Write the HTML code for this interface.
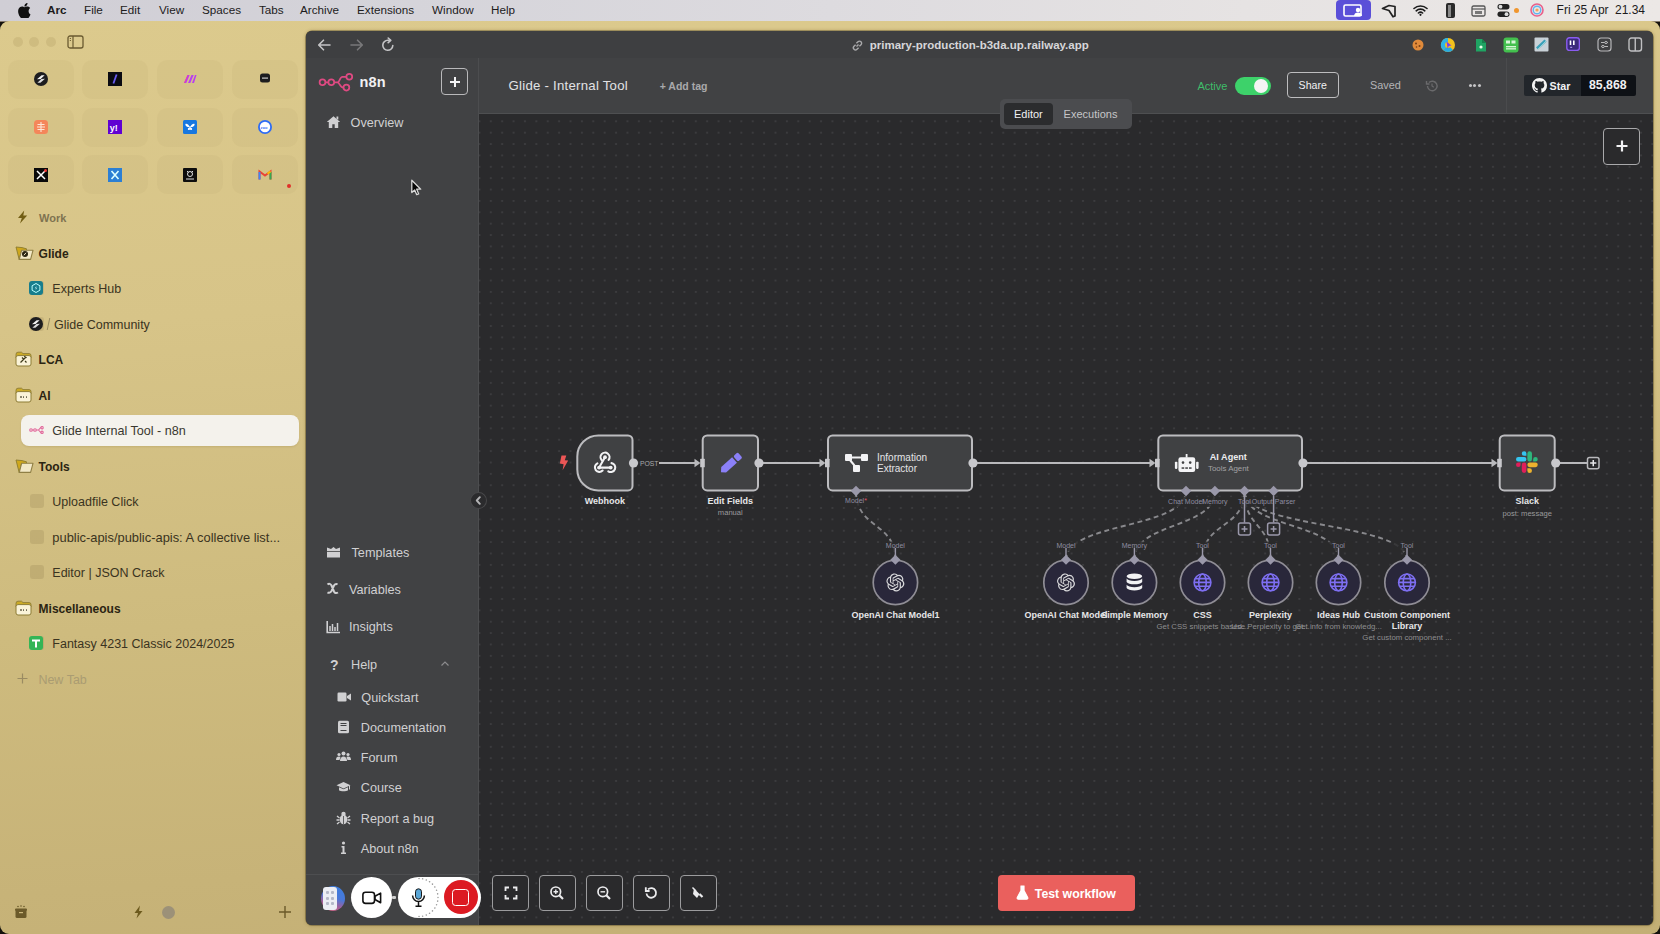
<!DOCTYPE html>
<html><head><meta charset="utf-8">
<style>
*{box-sizing:border-box;margin:0;padding:0}
html,body{width:1660px;height:934px;overflow:hidden;background:#14110c;font-family:"Liberation Sans",sans-serif}
.a{position:absolute}
.t{position:absolute;white-space:nowrap;line-height:16px}
#menubar{left:0;top:0;width:1660px;height:21.5px;background:linear-gradient(90deg,#d0ced5 0%,#d5d4da 25%,#dddbdf 50%,#e6e3e3 75%,#ece8e6 100%);border-bottom:1px solid #85796a;color:#1d1b1c;font-size:11.7px}
#menubar .t{top:2px}
#arc{left:0;top:21px;width:1660px;height:913px;border-radius:9px;background:linear-gradient(176deg,#dcca8d 0%,#d7c488 30%,#cebb7e 60%,#c7b378 85%,#c3af75 100%)}
.tile{position:absolute;width:66px;height:39px;border-radius:10px;background:rgba(120,100,40,0.045)}
.sl{font-size:12.5px;color:#3a3320}
.sb{font-size:12px;color:#2a2412;font-weight:bold}
#win{left:307px;top:31px;width:1346px;height:894px;background:#3e3f41;border-radius:6px;overflow:hidden}
.ns{font-size:12.7px;color:#d0d0d2}
</style></head>
<body>
<!-- MENU BAR -->
<div id="menubar" class="a">
 <svg class="a" style="left:18px;top:3px" width="13" height="15" viewBox="0 0 13 15"><path d="M10.6 8c0-1.9 1.5-2.8 1.6-2.9-.9-1.3-2.3-1.5-2.8-1.5-1.2-.1-2.3.7-2.9.7-.6 0-1.5-.7-2.5-.7C2.7 3.6 1.5 4.4.8 5.6c-1.4 2.4-.4 6 1 8 .7 1 1.4 2 2.4 2 1 0 1.3-.6 2.5-.6s1.5.6 2.5.6 1.7-1 2.3-2c.7-1.1 1-2.2 1-2.3 0 0-2-.8-1.9-3.3zM8.7 2.4c.5-.6.9-1.5.8-2.4-.8 0-1.7.5-2.3 1.1-.5.6-.9 1.5-.8 2.3.9.1 1.7-.4 2.3-1z" fill="#111"/></svg>
 <span class="t" style="left:47px;font-weight:bold">Arc</span>
 <span class="t" style="left:84px">File</span>
 <span class="t" style="left:120px">Edit</span>
 <span class="t" style="left:159px">View</span>
 <span class="t" style="left:202px">Spaces</span>
 <span class="t" style="left:259px">Tabs</span>
 <span class="t" style="left:300px">Archive</span>
 <span class="t" style="left:357px">Extensions</span>
 <span class="t" style="left:432px">Window</span>
 <span class="t" style="left:491px">Help</span>
 <div class="a" style="left:1336px;top:0;width:35px;height:20px;background:#5a4fd8;border-radius:4px"></div>
 <svg class="a" style="left:1343px;top:4px" width="21" height="13" viewBox="0 0 21 13"><rect x="1" y="1" width="17" height="11" rx="1.5" fill="none" stroke="#fff" stroke-width="1.6"/><circle cx="15" cy="6" r="2.2" fill="#fff"/><path d="M11 12c0-2.5 2-3.6 4-3.6s4 1.1 4 3.6z" fill="#fff"/></svg>
 <svg class="a" style="left:1381px;top:4px" width="16" height="14" viewBox="0 0 16 14"><path d="M1.5 4.5L8 1.5l6 1v9.5l-2 .8L8 6.5z" fill="none" stroke="#222" stroke-width="1.7" stroke-linejoin="round"/></svg>
 <svg class="a" style="left:1413px;top:4px" width="15" height="12" viewBox="0 0 15 12"><path d="M1 4.5a9.5 9.5 0 0 1 13 0M3.2 6.8a6.3 6.3 0 0 1 8.6 0M5.4 9a3.2 3.2 0 0 1 4.2 0" fill="none" stroke="#1a1a1a" stroke-width="1.6" stroke-linecap="round"/><circle cx="7.5" cy="10.8" r="1.1" fill="#1a1a1a"/></svg>
 <div class="a" style="left:1446px;top:3px;width:9px;height:15px;border-radius:2px;background:#2a2a2a"></div>
 <div class="a" style="left:1447.5px;top:4.5px;width:3px;height:12px;background:#8a8a8a"></div>
 <svg class="a" style="left:1471px;top:5px" width="15" height="12" viewBox="0 0 15 12"><rect x="1" y="1" width="13" height="10" rx="1.5" fill="none" stroke="#555" stroke-width="1.3"/><line x1="1" y1="4" x2="14" y2="4" stroke="#555" stroke-width="1.2"/><rect x="4" y="6" width="7" height="3" fill="#777"/></svg>
 <svg class="a" style="left:1497px;top:3px" width="13" height="15" viewBox="0 0 13 15"><rect x="0.5" y="1" width="12" height="5.5" rx="2.7" fill="#222"/><circle cx="3.5" cy="3.7" r="1.9" fill="#ddd"/><rect x="0.5" y="8.5" width="12" height="5.5" rx="2.7" fill="#222"/><circle cx="9.5" cy="11.2" r="1.9" fill="#ddd"/></svg>
 <div class="a" style="left:1514px;top:8px;width:5px;height:5px;border-radius:50%;background:#f0962e"></div>
 <svg class="a" style="left:1530px;top:3px" width="14" height="14" viewBox="0 0 14 14"><circle cx="7" cy="7" r="6" fill="none" stroke="#e9608a" stroke-width="1.6"/><circle cx="7" cy="7" r="3.8" fill="none" stroke="#5fb6f0" stroke-width="1.4"/><circle cx="7" cy="7" r="1.6" fill="#f3a35a"/></svg>
 <span class="t" style="left:1556.6px;font-size:12px">Fri 25 Apr</span><span class="t" style="left:1615px;font-size:12px">21.34</span>
</div>

<!-- ARC SIDEBAR -->
<div id="arc" class="a"></div>
<div class="a" style="left:12.5px;top:37px;width:10px;height:10px;border-radius:50%;background:rgba(120,100,50,0.13)"></div>
<div class="a" style="left:29.299999999999997px;top:37px;width:10px;height:10px;border-radius:50%;background:rgba(120,100,50,0.13)"></div>
<div class="a" style="left:46.4px;top:37px;width:10px;height:10px;border-radius:50%;background:rgba(120,100,50,0.13)"></div>
<svg class="a" style="left:67px;top:35px" width="17" height="14" viewBox="0 0 17 14"><rect x="1" y="1" width="15" height="12" rx="2" fill="none" stroke="#6a5a30" stroke-width="1.3"/><line x1="6" y1="1" x2="6" y2="13" stroke="#6a5a30" stroke-width="1.2"/><line x1="2.8" y1="3.5" x2="4" y2="3.5" stroke="#6a5a30" stroke-width=".9"/><line x1="2.8" y1="5.5" x2="4" y2="5.5" stroke="#6a5a30" stroke-width=".9"/></svg>
<div class="tile" style="left:7.6px;top:60px"></div>
<div class="tile" style="left:82.3px;top:60px"></div>
<div class="tile" style="left:157.2px;top:60px"></div>
<div class="tile" style="left:232px;top:60px"></div>
<div class="tile" style="left:7.6px;top:108px"></div>
<div class="tile" style="left:82.3px;top:108px"></div>
<div class="tile" style="left:157.2px;top:108px"></div>
<div class="tile" style="left:232px;top:108px"></div>
<div class="tile" style="left:7.6px;top:155px"></div>
<div class="tile" style="left:82.3px;top:155px"></div>
<div class="tile" style="left:157.2px;top:155px"></div>
<div class="tile" style="left:232px;top:155px"></div>
<svg class="a" style="left:33.8px;top:72.4px" width="14" height="14" viewBox="0 0 14 14"><circle cx="7" cy="7" r="7" fill="#1d1d1f"/><path d="M3 7.2L7.6 3.2H10.6L6.6 6.9z" fill="#f4f4f4"/><path d="M11 6.8L6.4 10.8H3.4L7.4 7.1z" fill="#dcdcdc"/></svg>
<svg class="a" style="left:108.0px;top:72.4px" width="14" height="14" viewBox="0 0 14 14"><rect width="14" height="14" fill="#0b0b12"/><path d="M8.6 2.5L5.4 11.5" stroke="#6b5cf0" stroke-width="1.8"/></svg>
<svg class="a" style="left:183.4px;top:72.4px" width="14" height="14" viewBox="0 0 14 14"><path d="M1 11L4.5 3h2.2L3.3 11zM5 11L8.5 3h2.2L7.3 11zM9 11l3-8h1.5L11 11z" fill="#b93ff0"/><path d="M1 11L4.5 3h1L2 11z" fill="#e83fb0"/></svg>
<svg class="a" style="left:257.8px;top:71.4px" width="14" height="14" viewBox="0 0 14 14"><rect x="2" y="2.5" width="10" height="9" rx="2.5" fill="#1d1d1f"/><rect x="4" y="6.5" width="6" height="1.2" fill="#ccc"/></svg>
<svg class="a" style="left:33.8px;top:120.0px" width="14" height="14" viewBox="0 0 14 14"><rect width="14" height="14" rx="3.5" fill="#f4865a"/><path d="M7 2v10M3.5 4.5h7M3 7h8M3.5 9.5h7" stroke="#fde5d6" stroke-width="1.1"/></svg>
<svg class="a" style="left:108.0px;top:120.0px" width="14" height="14" viewBox="0 0 14 14"><rect width="14" height="14" fill="#6001d2"/><text x="1.8" y="10.8" font-size="9" font-weight="bold" fill="#fff" font-family="Liberation Sans">y!</text></svg>
<svg class="a" style="left:183.4px;top:120.0px" width="14" height="14" viewBox="0 0 14 14"><rect width="14" height="14" rx="1.5" fill="#1677e0"/><path d="M7 7C5.5 4 3 3 2.5 4s.5 3.5 4.5 3c-3 1-2.5 3-1 3S7 8 7 7zM7 7c1.5-3 4-4 4.5-3s-.5 3.5-4.5 3c3 1 2.5 3 1 3S7 8 7 7z" fill="#fff"/></svg>
<svg class="a" style="left:257.8px;top:120.0px" width="14" height="14" viewBox="0 0 14 14"><circle cx="7" cy="7" r="7" fill="#2d6cf5"/><circle cx="7" cy="7" r="5.2" fill="#fff"/><text x="2.6" y="8.6" font-size="4" fill="#2d6cf5" font-family="Liberation Sans" font-weight="bold">zoo</text></svg>
<svg class="a" style="left:33.8px;top:167.6px" width="14" height="14" viewBox="0 0 14 14"><rect width="14" height="14" fill="#0a0a0a"/><path d="M3 3l8 8M11 3L3 11" stroke="#fff" stroke-width="1.5"/><circle cx="11.5" cy="2.5" r="1.5" fill="#e33"/></svg>
<svg class="a" style="left:108.0px;top:167.6px" width="14" height="14" viewBox="0 0 14 14"><rect width="14" height="14" fill="#2b7fd4"/><path d="M3.5 3l7 8M10.5 3l-7 8" stroke="#dff" stroke-width="1.6"/></svg>
<svg class="a" style="left:183.4px;top:167.6px" width="14" height="14" viewBox="0 0 14 14"><rect width="14" height="14" rx="1" fill="#0d0d0d"/><circle cx="7" cy="6" r="2.5" fill="none" stroke="#ddd" stroke-width="1"/><path d="M3 11h8M4 3l1.5 1.5M10 3L8.5 4.5" stroke="#ddd" stroke-width="1"/></svg>
<svg class="a" style="left:257.8px;top:167.6px" width="14" height="14" viewBox="0 0 14 14"><path d="M1.5 11.5V3.5l5.5 4 5.5-4v8" fill="none" stroke="#ea4335" stroke-width="2"/><path d="M1.5 11.5V4" stroke="#4285f4" stroke-width="2"/><path d="M12.5 11.5V4" stroke="#34a853" stroke-width="2"/><path d="M9.5 5.7l3-2.2" stroke="#fbbc04" stroke-width="2"/></svg>
<div class="a" style="left:287px;top:184px;width:4px;height:4px;border-radius:50%;background:#e0302a"></div>
<svg class="a" style="left:17px;top:210.4px" width="11" height="14" viewBox="0 0 11 14"><path d="M7.2 0.5L1 8h3.8L3 13.5 10.2 5.6H6.3z" fill="#735e14"/></svg>
<span class="t" style="left:39px;top:209.79px;font-size:11px;font-weight:bold;color:#7f7350">Work</span>
<svg class="a" style="left:14.8px;top:245.70000000000002px" width="19" height="15" viewBox="0 0 19 15"><path d="M1,1 L7,1.6 L11.5,2.8 L11.5,5 L6.5,5 L4.2,13.6 Z" fill="#cfa81c" stroke="#8a7a30" stroke-width="0.9" stroke-linejoin="round"/><path d="M6.6,4.3 H18 L15.6,13.4 H4.3 Z" fill="#f2e8c6" stroke="#8f7f45" stroke-width="1.1" stroke-linejoin="round"/></svg>
<svg class="a" style="left:21px;top:250.1px" width="8" height="8" viewBox="0 0 8 8"><circle cx="4" cy="4" r="3" fill="#2a2412"/><path d="M3 5.2L5 2.8" stroke="#f2e8c6" stroke-width="1"/></svg>
<span class="t sb" style="left:38.6px;top:245.94px">Glide</span>
<div class="a" style="left:29.5px;top:281.40000000000003px;width:14px;height:14px;border-radius:3px;background:rgba(110,95,50,0.16)"></div>
<span class="t sl" style="left:52.3px;top:281.27px;font-size:12.5px">Experts Hub</span>
<div class="a" style="left:29.5px;top:316.90000000000003px;width:14px;height:14px;border-radius:3px;background:rgba(110,95,50,0.16)"></div>
<span class="t sl" style="left:54px;top:316.77px;font-size:12.5px">Glide Community</span>
<svg class="a" style="left:15px;top:351.40000000000003px" width="17" height="16" viewBox="0 0 17 16"><path d="M1,3.5 Q1,1.2 3,1.2 H6.5 L8,2.6 H14 Q16,2.6 16,4.5 V7 H1 Z" fill="#cbab26" stroke="#8d7c35" stroke-width="0.9"/><rect x="1" y="4.6" width="15" height="10.4" rx="2" fill="#faf3d8" stroke="#8d7c35" stroke-width="1"/></svg>
<svg class="a" style="left:19px;top:355.40000000000003px" width="9" height="9" viewBox="0 0 9 9"><path d="M1.5 7.5L6.5 2.5M3 2.5l1.5 1.5M6 6l1.5 1.5M5 1.5c1 0 2 .5 2.5 1.5" stroke="#3e3a1a" stroke-width="1.2" fill="none"/></svg>
<span class="t sb" style="left:38.6px;top:352.44px">LCA</span>
<svg class="a" style="left:15px;top:386.90000000000003px" width="17" height="16" viewBox="0 0 17 16"><path d="M1,3.5 Q1,1.2 3,1.2 H6.5 L8,2.6 H14 Q16,2.6 16,4.5 V7 H1 Z" fill="#cbab26" stroke="#8d7c35" stroke-width="0.9"/><rect x="1" y="4.6" width="15" height="10.4" rx="2" fill="#faf3d8" stroke="#8d7c35" stroke-width="1"/></svg>
<div class="a" style="left:19.7px;top:395.70000000000005px;width:1.9px;height:1.9px;border-radius:50%;background:#6a6550"></div>
<div class="a" style="left:22.599999999999998px;top:395.70000000000005px;width:1.9px;height:1.9px;border-radius:50%;background:#6a6550"></div>
<div class="a" style="left:25.5px;top:395.70000000000005px;width:1.9px;height:1.9px;border-radius:50%;background:#6a6550"></div>
<span class="t sb" style="left:38.6px;top:387.94px">AI</span>
<div class="a" style="left:21px;top:415px;width:278px;height:30.6px;border-radius:8px;background:#f4f2ec;box-shadow:0 1px 2px rgba(80,60,0,0.12)"></div>
<svg class="a" style="left:29px;top:426.40000000000003px" width="15" height="8" viewBox="0 0 15 8"><g fill="none" stroke="#e2679b" stroke-width="1.1"><circle cx="2" cy="4" r="1.3"/><circle cx="6" cy="4" r="1.3"/><path d="M3.3 4h1.4M7.3 4h2.2l2-2.3h1M9.5 4l2 2.3h1"/><circle cx="13" cy="1.7" r="1.2"/><circle cx="13" cy="6.3" r="1.2"/></g></svg>
<span class="t sl" style="left:52.3px;top:423.23px;font-size:12.6px;color:#3a3830">Glide Internal Tool - n8n</span>
<svg class="a" style="left:14.8px;top:458.70000000000005px" width="19" height="15" viewBox="0 0 19 15"><path d="M1,1 L7,1.6 L11.5,2.8 L11.5,5 L6.5,5 L4.2,13.6 Z" fill="#cfa81c" stroke="#8a7a30" stroke-width="0.9" stroke-linejoin="round"/><path d="M6.6,4.3 H18 L15.6,13.4 H4.3 Z" fill="#f2e8c6" stroke="#8f7f45" stroke-width="1.1" stroke-linejoin="round"/></svg>
<span class="t sb" style="left:38.6px;top:458.94px">Tools</span>
<div class="a" style="left:29.5px;top:494.40000000000003px;width:14px;height:14px;border-radius:3px;background:rgba(110,95,50,0.16)"></div>
<span class="t sl" style="left:52.3px;top:494.27px;font-size:12.5px">Uploadfile Click</span>
<div class="a" style="left:29.5px;top:529.9px;width:14px;height:14px;border-radius:3px;background:rgba(110,95,50,0.16)"></div>
<span class="t sl" style="left:52.3px;top:529.63px;font-size:12.9px">public-apis/public-apis: A collective list...</span>
<div class="a" style="left:29.5px;top:565.4px;width:14px;height:14px;border-radius:3px;background:rgba(110,95,50,0.16)"></div>
<span class="t sl" style="left:52.3px;top:565.27px;font-size:12.5px">Editor | JSON Crack</span>
<svg class="a" style="left:15px;top:599.9px" width="17" height="16" viewBox="0 0 17 16"><path d="M1,3.5 Q1,1.2 3,1.2 H6.5 L8,2.6 H14 Q16,2.6 16,4.5 V7 H1 Z" fill="#cbab26" stroke="#8d7c35" stroke-width="0.9"/><rect x="1" y="4.6" width="15" height="10.4" rx="2" fill="#faf3d8" stroke="#8d7c35" stroke-width="1"/></svg>
<div class="a" style="left:19.7px;top:608.6999999999999px;width:1.9px;height:1.9px;border-radius:50%;background:#6a6550"></div>
<div class="a" style="left:22.599999999999998px;top:608.6999999999999px;width:1.9px;height:1.9px;border-radius:50%;background:#6a6550"></div>
<div class="a" style="left:25.5px;top:608.6999999999999px;width:1.9px;height:1.9px;border-radius:50%;background:#6a6550"></div>
<span class="t sb" style="left:38.6px;top:600.94px">Miscellaneous</span>
<div class="a" style="left:29.5px;top:636.4px;width:14px;height:14px;border-radius:3px;background:rgba(110,95,50,0.16)"></div>
<span class="t sl" style="left:52.3px;top:636.27px;font-size:12.5px">Fantasy 4231 Classic 2024/2025</span>
<svg class="a" style="left:17px;top:673.4px" width="11" height="11" viewBox="0 0 11 11"><path d="M5.5 0.5v10M0.5 5.5h10" stroke="#9a8b62" stroke-width="1.2"/></svg>
<span class="t" style="left:38.4px;top:671.77px;font-size:12.5px;color:#aa9c72">New Tab</span>
<svg class="a" style="left:29.4px;top:281.40000000000003px" width="14" height="14" viewBox="0 0 14 14"><rect width="14" height="14" rx="3" fill="#177d8c"/><path d="M7 2.5l3.9 2.25v4.5L7 11.5 3.1 9.25v-4.5z" fill="none" stroke="#bff" stroke-width="1"/><path d="M7.8 4.5L5.8 7.3h1.6L6.3 9.5l2-2.8H6.7z" fill="#dff"/></svg>
<svg class="a" style="left:29.4px;top:316.90000000000003px" width="14" height="14" viewBox="0 0 14 14"><circle cx="7" cy="7" r="7" fill="#1d1d1f"/><path d="M3 7.2L7.6 3.2H10.6L6.6 6.9z" fill="#f4f4f4"/><path d="M11 6.8L6.4 10.8H3.4L7.4 7.1z" fill="#dcdcdc"/></svg>
<div class="a" style="left:47.5px;top:317.90000000000003px;width:1px;height:12px;background:#9a8c60;transform:skewX(-12deg)"></div>
<svg class="a" style="left:29.4px;top:636.4px" width="14" height="14" viewBox="0 0 14 14"><rect width="14" height="14" rx="3" fill="#34b556"/><path d="M3 4.5h8M7 4.5v7" stroke="#fff" stroke-width="2"/></svg>
<svg class="a" style="left:14px;top:905px" width="14" height="14" viewBox="0 0 14 14"><rect x="1.5" y="5" width="11" height="8" rx="1.5" fill="#6b5a2a"/><rect x="1" y="3.5" width="12" height="2.5" rx="1" fill="#6b5a2a"/><circle cx="4" cy="1.5" r=".8" fill="#6b5a2a"/><circle cx="7" cy="1" r=".8" fill="#6b5a2a"/><circle cx="10" cy="1.5" r=".8" fill="#6b5a2a"/><rect x="5" y="7" width="4" height="1.2" fill="#cdb97e"/></svg>
<svg class="a" style="left:133px;top:905px" width="11" height="14" viewBox="0 0 11 14"><path d="M7 0.5L1.5 8h3.5L3.5 13.5 9.5 6H6z" fill="#6d5a1e"/></svg>
<div class="a" style="left:162px;top:906px;width:13px;height:13px;border-radius:50%;background:#9c9178"></div>
<svg class="a" style="left:278px;top:905px" width="14" height="14" viewBox="0 0 14 14"><path d="M7 1v12M1 7h12" stroke="#6b5a2a" stroke-width="1.4"/></svg>
<!-- WINDOW -->
<div class="a" style="left:306px;top:30.5px;width:1347px;height:894px;background:#3e3f41;border-radius:6px;overflow:hidden;box-shadow:0 0 0 0.6px rgba(50,40,15,0.55),0 0 3px 1px rgba(90,70,20,0.25)">
<div class="a" style="left:-306px;top:-30.5px;width:1660px;height:934px">
<div class="a" style="left:306px;top:30.5px;width:1347px;height:28px;background:#3e3f41"></div>
<div class="a" style="left:306px;top:57.5px;width:1347px;height:1px;background:#4b4c4e"></div>
<svg class="a" style="left:317px;top:39px" width="14" height="12" viewBox="0 0 14 12"><path d="M13 6H2M6.5 1.2L1.7 6l4.8 4.8" fill="none" stroke="#c4c4c6" stroke-width="1.6" stroke-linecap="round" stroke-linejoin="round"/></svg>
<svg class="a" style="left:349.5px;top:39px" width="14" height="12" viewBox="0 0 14 12"><path d="M1 6h11M7.5 1.2L12.3 6l-4.8 4.8" fill="none" stroke="#78787a" stroke-width="1.6" stroke-linecap="round" stroke-linejoin="round"/></svg>
<svg class="a" style="left:381px;top:37px" width="14" height="15" viewBox="0 0 14 15"><path d="M11.8 8.5A5 5 0 1 1 7 3.3h2" fill="none" stroke="#c4c4c6" stroke-width="1.6" stroke-linecap="round"/><path d="M7.2 1L9.8 3.3 7.2 5.6" fill="none" stroke="#c4c4c6" stroke-width="1.6" stroke-linecap="round" stroke-linejoin="round"/></svg>
<svg class="a" style="left:850.5px;top:38.5px" width="13" height="13" viewBox="0 0 13 13"><g fill="none" stroke="#a9a9ab" stroke-width="1.4"><path d="M5.5 7.5l2-2"/><path d="M4.6 5.7L3 7.3a2.1 2.1 0 0 0 3 3L7.6 8.7"/><path d="M8.4 7.3L10 5.7a2.1 2.1 0 0 0-3-3L5.4 4.3"/></g></svg>
<span class="t" style="left:869.8px;top:36.5px;font-size:11.5px;font-weight:bold;color:#d6d6d8">primary-production-b3da.up.railway.app</span>
<svg class="a" style="left:1411px;top:38px" width="14" height="14" viewBox="0 0 14 14"><circle cx="7" cy="7" r="5.5" fill="#e08a3a"/><circle cx="5" cy="5.5" r="1" fill="#7a3d10"/><circle cx="8.5" cy="8" r="1" fill="#7a3d10"/><circle cx="5.5" cy="9" r=".8" fill="#7a3d10"/></svg>
<svg class="a" style="left:1440px;top:36.5px" width="16" height="16" viewBox="0 0 16 16"><circle cx="8" cy="8" r="7" fill="#f3c21c"/><path d="M8 1A7 7 0 0 0 3 13L8 8z" fill="#2fb4e6"/><path d="M3 13A7 7 0 0 0 13 13L8 8z" fill="#27a9e0"/><circle cx="8" cy="8" r="3" fill="#f3c21c"/><path d="M6.5 4.5L11.5 8.5 8.8 9 7.6 11.8z" fill="#7b3cf0"/></svg>
<svg class="a" style="left:1474px;top:38px" width="13" height="14" viewBox="0 0 13 14"><path d="M2 1h6l4 4v8.5H2z" fill="#1fa463"/><path d="M8 1v4h4" fill="#16804c"/><circle cx="7" cy="9" r="1.6" fill="#e8ffe8"/></svg>
<svg class="a" style="left:1503px;top:36.5px" width="16" height="16" viewBox="0 0 16 16"><rect x="0.5" y="0.5" width="15" height="15" rx="3" fill="#43c04e"/><rect x="3" y="3.5" width="4" height="3" fill="#d8f5d8"/><rect x="8.5" y="3.5" width="4" height="3" fill="#d8f5d8"/><rect x="3" y="9" width="10" height="3.5" fill="#d8f5d8"/><path d="M3 10.7h10" stroke="#43c04e" stroke-width=".8"/></svg>
<svg class="a" style="left:1534px;top:37px" width="15" height="15" viewBox="0 0 15 15"><rect x="0.5" y="0.5" width="14" height="14" rx="1" fill="#c9d2d8"/><path d="M3 11.5L11.5 3.5" stroke="#3aa0b8" stroke-width="3"/><path d="M4 12l8-8" stroke="#8fd0d8" stroke-width="1"/></svg>
<svg class="a" style="left:1566px;top:37px" width="14" height="14" viewBox="0 0 14 14"><rect x="0.8" y="0.8" width="12.6" height="12.6" rx="2.5" fill="#3a2a7a" stroke="#8a5cf0" stroke-width="1.4"/><path d="M4.5 3.5v4.5M7.8 3.5v4.5" stroke="#fff" stroke-width="1.6"/><path d="M4.2 10.3h2" stroke="#b9a0ff" stroke-width="1"/></svg>
<svg class="a" style="left:1597px;top:37px" width="15" height="15" viewBox="0 0 15 15"><rect x="1" y="1" width="13" height="13" rx="3" fill="none" stroke="#b8b8ba" stroke-width="1.2"/><path d="M4 5.5h7M4 9.5h7" stroke="#b8b8ba" stroke-width="1.2"/><circle cx="9" cy="5.5" r="1.2" fill="#3e3f41" stroke="#b8b8ba" stroke-width="1"/><circle cx="6" cy="9.5" r="1.2" fill="#3e3f41" stroke="#b8b8ba" stroke-width="1"/></svg>
<svg class="a" style="left:1628px;top:37px" width="15" height="15" viewBox="0 0 15 15"><rect x="1" y="1" width="12.5" height="13" rx="2.5" fill="none" stroke="#c0c0c2" stroke-width="1.4"/><line x1="7.25" y1="1" x2="7.25" y2="14" stroke="#c0c0c2" stroke-width="1.4"/></svg>
<div class="a" style="left:306px;top:58px;width:172px;height:867px;background:#414244"></div>
<div class="a" style="left:478px;top:58px;width:1px;height:867px;background:#4c4d4f"></div>
<svg class="a" style="left:314px;top:68px" width="42" height="28" viewBox="0 0 42 28"><g fill="none" stroke="#de4a82" stroke-width="1.75"><circle cx="8.5" cy="14.3" r="2.9"/><circle cx="17.3" cy="14.3" r="2.9"/><circle cx="35.3" cy="8.8" r="2.9"/><circle cx="32.4" cy="19.6" r="2.9"/><path d="M11.4,14.3H14.4M20.2,14.3H23.5C25.8,14.3 25.6,8.8 28.5,8.8H32.4M23.5,14.3C25.8,14.3 25.5,19.6 29.5,19.6"/></g></svg>
<span class="t" style="left:359.5px;top:74px;font-size:14.5px;font-weight:bold;color:#f0f0f2;letter-spacing:.2px">n8n</span>
<div class="a" style="left:441px;top:68.3px;width:27px;height:26.5px;border:1.5px solid #b9b9bb;border-radius:4px"></div>
<svg class="a" style="left:448.5px;top:75.5px" width="12" height="12" viewBox="0 0 12 12"><path d="M6 1v10M1 6h10" stroke="#f4f4f6" stroke-width="2"/></svg>
<svg class="a" style="left:326px;top:115px" width="15" height="14" viewBox="0 0 15 14"><path d="M7.5 1.2L.8 7h2v6h3.5V9.3h2.4V13h3.5V7h2z" fill="#d0d0d2"/><rect x="10.5" y="1.5" width="1.8" height="3" fill="#d0d0d2"/></svg>
<span class="t" style="left:350.6px;top:115.00px;font-size:12.7px;color:#d0d0d2">Overview</span>
<svg class="a" style="left:326px;top:544.8px" width="15" height="14" viewBox="0 0 15 14"><path d="M1 5h13v7.5H1z" fill="#d0d0d2"/><path d="M1 2.5l4 1.5 2.5-2 2.5 2 4-1.5V5H1z" fill="#d0d0d2"/><path d="M1 6.5h13" stroke="#414244" stroke-width=".8"/></svg>
<span class="t" style="left:351.5px;top:544.50px;font-size:12.7px;color:#d0d0d2">Templates</span>
<svg class="a" style="left:325px;top:582px" width="15" height="14" viewBox="0 0 15 14"><path d="M2.5 2.5c1.5-1.2 3-.8 4 1l2.5 6c.8 1.8 2.3 2 4 1M12.5 2.5c-1.2-.8-2.5-.5-3.5 1L6.5 9c-1 1.8-2.5 2.2-4 1.3" fill="none" stroke="#d0d0d2" stroke-width="2"/></svg>
<span class="t" style="left:349px;top:581.70px;font-size:12.7px;color:#d0d0d2">Variables</span>
<svg class="a" style="left:325.5px;top:619.5px" width="15" height="14" viewBox="0 0 15 14"><path d="M1.2 1v11.5H14" fill="none" stroke="#d0d0d2" stroke-width="1.6"/><path d="M4 6v5M6.5 4v7M9 7v4M11.5 3v8" stroke="#d0d0d2" stroke-width="1.5"/></svg>
<span class="t" style="left:349px;top:619.20px;font-size:12.7px;color:#d0d0d2">Insights</span>
<svg class="a" style="left:327px;top:656.8px" width="15" height="14" viewBox="0 0 15 14"><text x="3" y="12.5" font-size="14" font-weight="bold" fill="#d0d0d2" font-family="Liberation Sans">?</text></svg>
<span class="t" style="left:351px;top:656.50px;font-size:12.7px;color:#d0d0d2">Help</span>
<svg class="a" style="left:440px;top:660px" width="10" height="7" viewBox="0 0 10 7"><path d="M1.5 5.5L5 2l3.5 3.5" fill="none" stroke="#8c8c8e" stroke-width="1.2"/></svg>
<svg class="a" style="left:336.5px;top:689.9px" width="15" height="14" viewBox="0 0 15 14"><rect x="0.5" y="2.5" width="9" height="9" rx="1.2" fill="#d0d0d2"/><path d="M10 6l4-2.5v7L10 8z" fill="#d0d0d2"/></svg>
<span class="t" style="left:361.3px;top:689.60px;font-size:12.7px;color:#d0d0d2">Quickstart</span>
<svg class="a" style="left:336px;top:720.1px" width="15" height="14" viewBox="0 0 15 14"><rect x="2" y="0.8" width="11" height="12.5" rx="1.5" fill="#d0d0d2"/><path d="M4.5 3.5h6M4.5 5.5h6M4.5 10.5h6" stroke="#414244" stroke-width="1"/></svg>
<span class="t" style="left:360.8px;top:719.80px;font-size:12.7px;color:#d0d0d2">Documentation</span>
<svg class="a" style="left:336px;top:750.2px" width="15" height="14" viewBox="0 0 15 14"><circle cx="7.5" cy="3.5" r="2" fill="#d0d0d2"/><circle cx="3" cy="4.5" r="1.6" fill="#d0d0d2"/><circle cx="12" cy="4.5" r="1.6" fill="#d0d0d2"/><path d="M4 11c0-3 1.5-4.5 3.5-4.5S11 8 11 11z" fill="#d0d0d2"/><path d="M0 10c0-2.5 1-3.5 3-3.5.8 0 1.3.3 1.5.5L3.5 10zM15 10c0-2.5-1-3.5-3-3.5-.8 0-1.3.3-1.5.5l1 3z" fill="#d0d0d2"/></svg>
<span class="t" style="left:360.8px;top:749.90px;font-size:12.7px;color:#d0d0d2">Forum</span>
<svg class="a" style="left:336px;top:780.3px" width="15" height="14" viewBox="0 0 15 14"><path d="M7.5 2L0.5 5.2l7 3.2 7-3.2z" fill="#d0d0d2"/><path d="M3 7.2v3c1.5 1.3 7.5 1.3 9 0v-3l-4.5 2z" fill="#d0d0d2"/><path d="M13.5 5.5v4" stroke="#d0d0d2" stroke-width="1"/></svg>
<span class="t" style="left:360.8px;top:780.00px;font-size:12.7px;color:#d0d0d2">Course</span>
<svg class="a" style="left:336px;top:811px" width="15" height="14" viewBox="0 0 15 14"><ellipse cx="7.5" cy="8.5" rx="3.8" ry="4.8" fill="#d0d0d2"/><circle cx="7.5" cy="3" r="2.2" fill="#d0d0d2"/><path d="M1 5l2.5 2M14 5l-2.5 2M.5 9h3M14.5 9h-3M1 13l2.5-2M14 13l-2.5-2" stroke="#d0d0d2" stroke-width="1.3"/><path d="M7.5 5v8" stroke="#414244" stroke-width=".8"/></svg>
<span class="t" style="left:360.8px;top:810.70px;font-size:12.7px;color:#d0d0d2">Report a bug</span>
<svg class="a" style="left:336px;top:841.2px" width="15" height="14" viewBox="0 0 15 14"><circle cx="7.5" cy="2" r="1.6" fill="#d0d0d2"/><path d="M5.5 5h3v6.5h1.5V13h-5v-1.5h1.5V6.5H5.5z" fill="#d0d0d2"/></svg>
<span class="t" style="left:360.8px;top:840.90px;font-size:12.7px;color:#d0d0d2">About n8n</span>
<div class="a" style="left:306px;top:873.5px;width:172px;height:1px;background:#4d4e50"></div>
<div class="a" style="left:479px;top:58px;width:1174px;height:55.5px;background:#414244"></div>
<div class="a" style="left:479px;top:113px;width:1174px;height:1px;background:#525355"></div>
<span class="t" style="left:508.6px;top:78.4px;font-size:13.2px;letter-spacing:.25px;color:#e2e2e4">Glide - Internal Tool</span>
<span class="t" style="left:659.7px;top:77.8px;font-size:10.5px;font-weight:bold;color:#a9a9ab">+ Add tag</span>
<span class="t" style="left:1197.4px;top:78px;font-size:11px;color:#3fbe6a">Active</span>
<div class="a" style="left:1235px;top:76.5px;width:35.5px;height:18.5px;border-radius:9.5px;background:#3dd26a"></div>
<div class="a" style="left:1253.5px;top:78.5px;width:14.5px;height:14.5px;border-radius:50%;background:#f4f4f4"></div>
<div class="a" style="left:1287px;top:72.4px;width:51.5px;height:26px;border:1.3px solid #bdbdbf;border-radius:4px"></div>
<span class="t" style="left:1298.6px;top:76.9px;font-size:10.6px;color:#f0f0f2">Share</span>
<span class="t" style="left:1370px;top:76.9px;font-size:10.9px;color:#b4b4b6">Saved</span>
<svg class="a" style="left:1424.5px;top:78.5px" width="14" height="14" viewBox="0 0 14 14"><path d="M2.5 7a4.8 4.8 0 1 0 1.4-3.4" fill="none" stroke="#6a6a6c" stroke-width="1.4"/><path d="M1.5 2v3h3" fill="none" stroke="#6a6a6c" stroke-width="1.4"/><path d="M7 4.5V7l1.8 1.3" fill="none" stroke="#6a6a6c" stroke-width="1.2"/></svg>
<div class="a" style="left:1469.0px;top:84px;width:3.2px;height:3.2px;border-radius:50%;background:#c4c4c6"></div>
<div class="a" style="left:1473.3px;top:84px;width:3.2px;height:3.2px;border-radius:50%;background:#c4c4c6"></div>
<div class="a" style="left:1477.6px;top:84px;width:3.2px;height:3.2px;border-radius:50%;background:#c4c4c6"></div>
<div class="a" style="left:1506px;top:58px;width:1px;height:55px;background:#4a4b4d"></div>
<div class="a" style="left:1524px;top:74.5px;width:57px;height:21.5px;background:#22262b;border-radius:2px 0 0 2px"></div>
<div class="a" style="left:1580.5px;top:74.5px;width:55px;height:21.5px;background:#0e1116;border-radius:0 2px 2px 0"></div>
<svg class="a" style="left:1532px;top:77.5px" width="15" height="15" viewBox="0 0 16 16"><path fill="#f4f4f4" d="M8 0C3.58 0 0 3.58 0 8c0 3.54 2.29 6.53 5.47 7.59.4.07.55-.17.55-.38 0-.19-.01-.82-.01-1.49-2.01.37-2.53-.49-2.69-.94-.09-.23-.48-.94-.82-1.13-.28-.15-.68-.52-.01-.53.63-.01 1.08.58 1.23.82.72 1.21 1.87.87 2.33.66.07-.52.28-.87.51-1.07-1.78-.2-3.64-.89-3.64-3.95 0-.87.31-1.59.82-2.15-.08-.2-.36-1.02.08-2.12 0 0 .67-.21 2.2.82.64-.18 1.32-.27 2-.27.68 0 1.36.09 2 .27 1.53-1.04 2.2-.82 2.2-.82.44 1.1.16 1.92.08 2.12.51.56.82 1.27.82 2.15 0 3.07-1.87 3.75-3.65 3.95.29.25.54.73.54 1.48 0 1.07-.01 1.93-.01 2.2 0 .21.15.46.55.38A8.013 8.013 0 0016 8c0-4.42-3.58-8-8-8z"/></svg>
<span class="t" style="left:1549.6px;top:77.5px;font-size:10.7px;font-weight:bold;color:#f0f0f2">Star</span>
<span class="t" style="left:1589px;top:77.3px;font-size:12.3px;font-weight:bold;color:#f0f0f2">85,868</span>
<svg class="a" style="left:479px;top:113px" width="1174" height="812" viewBox="479 113 1174 812" font-family="Liberation Sans">
<defs><pattern id="dots" patternUnits="userSpaceOnUse" x="485.106" y="115.6135" width="11.388" height="11.373"><circle cx="5.694" cy="5.6865" r="1.0" fill="#3f3f42"/></pattern></defs>
<rect x="479" y="113" width="1174" height="812" fill="#2a2a2c"/>
<rect x="479" y="113" width="1174" height="812" fill="url(#dots)"/>
<rect x="479" y="113" width="1174" height="1" fill="#4e4f51"/>
<path d="M659,463.0H696" stroke="#b9b9bc" stroke-width="2"/>
<path d="M694.5,458.8L700.5,463.0L694.5,467.2z" fill="#b9b9bc"/>
<path d="M763,463.0H821" stroke="#b9b9bc" stroke-width="2"/>
<path d="M819.5,458.8L825.5,463.0L819.5,467.2z" fill="#b9b9bc"/>
<path d="M977,463.0H1151" stroke="#b9b9bc" stroke-width="2"/>
<path d="M1149.5,458.8L1155.5,463.0L1149.5,467.2z" fill="#b9b9bc"/>
<path d="M1307,463.0H1493" stroke="#b9b9bc" stroke-width="2"/>
<path d="M1491.5,458.8L1497.5,463.0L1491.5,467.2z" fill="#b9b9bc"/>
<path d="M1560,463.0H1587" stroke="#b9b9bc" stroke-width="2"/>
<rect x="1587.5" y="457.5" width="11.5" height="11.2" rx="2" fill="#2a2a2c" stroke="#b9b9bc" stroke-width="1.5"/>
<path d="M1593.25,460v6.2M1590.15,463.1h6.2" stroke="#e8e8ea" stroke-width="1.5"/>
<text x="640" y="465.5" font-size="6.8" fill="#a8a8aa">POST</text>
<path d="M895.4,559.8C895.4,521.8 856,529.0 856,491.0" fill="none" stroke="#88888c" stroke-width="1.9" stroke-dasharray="5 3.5"/>
<path d="M1066,559.8C1066,521.8 1186,529.0 1186,491.0" fill="none" stroke="#88888c" stroke-width="1.9" stroke-dasharray="5 3.5"/>
<path d="M1134.4,559.8C1134.4,521.8 1215,529.0 1215,491.0" fill="none" stroke="#88888c" stroke-width="1.9" stroke-dasharray="5 3.5"/>
<path d="M1202.5,559.8C1202.5,521.8 1244.5,529.0 1244.5,491.0" fill="none" stroke="#88888c" stroke-width="1.9" stroke-dasharray="5 3.5"/>
<path d="M1270.5,559.8C1270.5,521.8 1244.5,529.0 1244.5,491.0" fill="none" stroke="#88888c" stroke-width="1.9" stroke-dasharray="5 3.5"/>
<path d="M1338.5,559.8C1338.5,521.8 1244.5,529.0 1244.5,491.0" fill="none" stroke="#88888c" stroke-width="1.9" stroke-dasharray="5 3.5"/>
<path d="M1407,559.8C1407,521.8 1244.5,529.0 1244.5,491.0" fill="none" stroke="#88888c" stroke-width="1.9" stroke-dasharray="5 3.5"/>
<rect x="881.4" y="541.5" width="28" height="10" fill="#2a2a2c" opacity="0.85"/>
<rect x="1052" y="541.5" width="28" height="10" fill="#2a2a2c" opacity="0.85"/>
<rect x="1120.4" y="541.5" width="28" height="10" fill="#2a2a2c" opacity="0.85"/>
<rect x="1188.5" y="541.5" width="28" height="10" fill="#2a2a2c" opacity="0.85"/>
<rect x="1256.5" y="541.5" width="28" height="10" fill="#2a2a2c" opacity="0.85"/>
<rect x="1324.5" y="541.5" width="28" height="10" fill="#2a2a2c" opacity="0.85"/>
<rect x="1393" y="541.5" width="28" height="10" fill="#2a2a2c" opacity="0.85"/>
<rect x="840" y="497" width="32" height="10" fill="#2a2a2c" opacity="0.85"/>
<rect x="1160" y="497" width="130" height="10" fill="#2a2a2c" opacity="0.85"/>
<path d="M1244.5,496.0V522.6" stroke="#9a98aa" stroke-width="1.5"/>
<rect x="1238.5" y="523" width="12" height="12" rx="2" fill="#2a2a2c" stroke="#9a98aa" stroke-width="1.5"/>
<path d="M1244.5,526v6M1241.5,529h6" stroke="#9a98aa" stroke-width="1.5"/>
<path d="M1273.6,496.0V522.6" stroke="#9a98aa" stroke-width="1.5"/>
<rect x="1267.6" y="523" width="12" height="12" rx="2" fill="#2a2a2c" stroke="#9a98aa" stroke-width="1.5"/>
<path d="M1273.6,526v6M1270.6,529h6" stroke="#9a98aa" stroke-width="1.5"/>
<path d="M598.3,435.4H628.0A4.5,4.5 0 0 1 632.5,439.9V485.9A4.5,4.5 0 0 1 628.0,490.4H598.3A21,21 0 0 1 577.3,469.4V456.4A21,21 0 0 1 598.3,435.4Z" fill="#404143" stroke="#bcbcbf" stroke-width="2"/>
<circle cx="633.5" cy="463.0" r="4.6" fill="#c8c8cc"/>
<path d="M707.2,435.4H753.5A4.5,4.5 0 0 1 758,439.9V485.9A4.5,4.5 0 0 1 753.5,490.4H707.2A4.5,4.5 0 0 1 702.7,485.9V439.9A4.5,4.5 0 0 1 707.2,435.4Z" fill="#404143" stroke="#bcbcbf" stroke-width="2"/>
<rect x="700.2" y="458.7" width="4.6" height="8.6" rx=".5" fill="#c8c8cc"/>
<circle cx="759" cy="463.0" r="4.6" fill="#c8c8cc"/>
<path d="M832.5,435.4H967.5A4.5,4.5 0 0 1 972,439.9V485.9A4.5,4.5 0 0 1 967.5,490.4H832.5A4.5,4.5 0 0 1 828,485.9V439.9A4.5,4.5 0 0 1 832.5,435.4Z" fill="#404143" stroke="#bcbcbf" stroke-width="2"/>
<rect x="825.0" y="458.7" width="4.6" height="8.6" rx=".5" fill="#c8c8cc"/>
<circle cx="973" cy="463.0" r="4.6" fill="#c8c8cc"/>
<path d="M1162.8,435.4H1297.5A4.5,4.5 0 0 1 1302,439.9V485.9A4.5,4.5 0 0 1 1297.5,490.4H1162.8A4.5,4.5 0 0 1 1158.3,485.9V439.9A4.5,4.5 0 0 1 1162.8,435.4Z" fill="#404143" stroke="#bcbcbf" stroke-width="2"/>
<rect x="1155.0" y="458.7" width="4.6" height="8.6" rx=".5" fill="#c8c8cc"/>
<circle cx="1303" cy="463.0" r="4.6" fill="#c8c8cc"/>
<path d="M1504.2,435.4H1550.2A4.5,4.5 0 0 1 1554.7,439.9V485.9A4.5,4.5 0 0 1 1550.2,490.4H1504.2A4.5,4.5 0 0 1 1499.7,485.9V439.9A4.5,4.5 0 0 1 1504.2,435.4Z" fill="#404143" stroke="#bcbcbf" stroke-width="2"/>
<rect x="1497.2" y="458.7" width="4.6" height="8.6" rx=".5" fill="#c8c8cc"/>
<circle cx="1555.7" cy="463.0" r="4.6" fill="#c8c8cc"/>
<path d="M856,485.8L861.2,491.0L856,496.2L850.8,491.0z" fill="#9a98aa"/>
<path d="M1186,485.8L1191.2,491.0L1186,496.2L1180.8,491.0z" fill="#9a98aa"/>
<path d="M1214.9,485.8L1220.1000000000001,491.0L1214.9,496.2L1209.7,491.0z" fill="#9a98aa"/>
<path d="M1244.5,485.8L1249.7,491.0L1244.5,496.2L1239.3,491.0z" fill="#9a98aa"/>
<path d="M1273.6,485.8L1278.8,491.0L1273.6,496.2L1268.3999999999999,491.0z" fill="#9a98aa"/>
<text x="856" y="503.4" font-size="7" fill="#8f8da0" text-anchor="middle" font-weight="normal" >Model<tspan fill="#e0506a">*</tspan></text>
<text x="1186" y="503.6" font-size="7" fill="#8f8da0" text-anchor="middle" font-weight="normal" >Chat Model</text>
<text x="1214.9" y="503.6" font-size="7" fill="#8f8da0" text-anchor="middle" font-weight="normal" >Memory</text>
<text x="1244.5" y="503.6" font-size="7" fill="#8f8da0" text-anchor="middle" font-weight="normal" >Tool</text>
<text x="1273.6" y="503.6" font-size="7" fill="#8f8da0" text-anchor="middle" font-weight="normal" >Output Parser</text>
<circle cx="895.4" cy="582.4" r="22.2" fill="#29273a" stroke="#8f8d95" stroke-width="1.7"/>
<path d="M895.4,548V556" stroke="#9a98aa" stroke-width="1.4"/>
<path d="M895.4,554.8L900.4,559.8L895.4,564.8L890.4,559.8z" fill="#9a98aa"/>
<text x="895.4" y="548.3" font-size="7" fill="#8f8da0" text-anchor="middle" font-weight="normal" >Model</text>
<circle cx="1066" cy="582.4" r="22.2" fill="#29273a" stroke="#8f8d95" stroke-width="1.7"/>
<path d="M1066,548V556" stroke="#9a98aa" stroke-width="1.4"/>
<path d="M1066,554.8L1071.0,559.8L1066,564.8L1061.0,559.8z" fill="#9a98aa"/>
<text x="1066" y="548.3" font-size="7" fill="#8f8da0" text-anchor="middle" font-weight="normal" >Model</text>
<circle cx="1134.4" cy="582.4" r="22.2" fill="#29273a" stroke="#8f8d95" stroke-width="1.7"/>
<path d="M1134.4,548V556" stroke="#9a98aa" stroke-width="1.4"/>
<path d="M1134.4,554.8L1139.4,559.8L1134.4,564.8L1129.4,559.8z" fill="#9a98aa"/>
<text x="1134.4" y="548.3" font-size="7" fill="#8f8da0" text-anchor="middle" font-weight="normal" >Memory</text>
<circle cx="1202.5" cy="582.4" r="22.2" fill="#29273a" stroke="#8f8d95" stroke-width="1.7"/>
<path d="M1202.5,548V556" stroke="#9a98aa" stroke-width="1.4"/>
<path d="M1202.5,554.8L1207.5,559.8L1202.5,564.8L1197.5,559.8z" fill="#9a98aa"/>
<text x="1202.5" y="548.3" font-size="7" fill="#8f8da0" text-anchor="middle" font-weight="normal" >Tool</text>
<circle cx="1270.5" cy="582.4" r="22.2" fill="#29273a" stroke="#8f8d95" stroke-width="1.7"/>
<path d="M1270.5,548V556" stroke="#9a98aa" stroke-width="1.4"/>
<path d="M1270.5,554.8L1275.5,559.8L1270.5,564.8L1265.5,559.8z" fill="#9a98aa"/>
<text x="1270.5" y="548.3" font-size="7" fill="#8f8da0" text-anchor="middle" font-weight="normal" >Tool</text>
<circle cx="1338.5" cy="582.4" r="22.2" fill="#29273a" stroke="#8f8d95" stroke-width="1.7"/>
<path d="M1338.5,548V556" stroke="#9a98aa" stroke-width="1.4"/>
<path d="M1338.5,554.8L1343.5,559.8L1338.5,564.8L1333.5,559.8z" fill="#9a98aa"/>
<text x="1338.5" y="548.3" font-size="7" fill="#8f8da0" text-anchor="middle" font-weight="normal" >Tool</text>
<circle cx="1407" cy="582.4" r="22.2" fill="#29273a" stroke="#8f8d95" stroke-width="1.7"/>
<path d="M1407,548V556" stroke="#9a98aa" stroke-width="1.4"/>
<path d="M1407,554.8L1412.0,559.8L1407,564.8L1402.0,559.8z" fill="#9a98aa"/>
<text x="1407" y="548.3" font-size="7" fill="#8f8da0" text-anchor="middle" font-weight="normal" >Tool</text>
<text x="604.9" y="504.3" font-size="9" fill="#e6e6e8" text-anchor="middle" font-weight="bold" >Webhook</text>
<text x="730.3" y="504.3" font-size="9" fill="#e6e6e8" text-anchor="middle" font-weight="bold" >Edit Fields</text>
<text x="730.3" y="515" font-size="7.6" fill="#9a9a9c" text-anchor="middle" font-weight="normal" >manual</text>
<text x="1527.2" y="504.3" font-size="9" fill="#e6e6e8" text-anchor="middle" font-weight="bold" >Slack</text>
<text x="1527.2" y="515.8" font-size="7.6" fill="#9a9a9c" text-anchor="middle" font-weight="normal" >post: message</text>
<text x="877" y="461" font-size="10" fill="#e4e4e6" text-anchor="start" font-weight="normal" >Information</text>
<text x="877" y="472.2" font-size="10" fill="#e4e4e6" text-anchor="start" font-weight="normal" >Extractor</text>
<text x="1209.8" y="459.9" font-size="9.1" fill="#ececee" text-anchor="start" font-weight="bold" >AI Agent</text>
<text x="1208" y="471.3" font-size="7.9" fill="#a2a2a4" text-anchor="start" font-weight="normal" >Tools Agent</text>
<text x="895.4" y="617.5" font-size="9" fill="#e6e6e8" text-anchor="middle" font-weight="bold" >OpenAI Chat Model1</text>
<text x="1066" y="617.5" font-size="9" fill="#e6e6e8" text-anchor="middle" font-weight="bold" >OpenAI Chat Model</text>
<text x="1134.4" y="617.5" font-size="9" fill="#e6e6e8" text-anchor="middle" font-weight="bold" >Simple Memory</text>
<text x="1202.5" y="617.5" font-size="9" fill="#e6e6e8" text-anchor="middle" font-weight="bold" >CSS</text>
<text x="1270.5" y="617.5" font-size="9" fill="#e6e6e8" text-anchor="middle" font-weight="bold" >Perplexity</text>
<text x="1338.5" y="617.5" font-size="9" fill="#e6e6e8" text-anchor="middle" font-weight="bold" >Ideas Hub</text>
<text x="1407" y="617.5" font-size="9" fill="#e6e6e8" text-anchor="middle" font-weight="bold" >Custom Component</text>
<text x="1407" y="628.8" font-size="9" fill="#e6e6e8" text-anchor="middle" font-weight="bold" >Library</text>
<text x="1202.5" y="629.3" font-size="7.8" fill="#8e8e90" text-anchor="middle" font-weight="normal" >Get CSS snippets based...</text>
<text x="1270.5" y="629.3" font-size="7.8" fill="#8e8e90" text-anchor="middle" font-weight="normal" >Use Perplexity to get...</text>
<text x="1338.5" y="629.3" font-size="7.8" fill="#8e8e90" text-anchor="middle" font-weight="normal" >Get info from knowledg...</text>
<text x="1407" y="640.3" font-size="7.8" fill="#8e8e90" text-anchor="middle" font-weight="normal" >Get custom component ...</text>
<path d="M561.5,455.5H566.3L564.8,460.2L568.2,460.6L562.6,470.2L563.6,464.2L559.8,463.6Z" fill="#ec5656"/>
<g fill="none" stroke="#f2f2f4" stroke-width="2.1" stroke-linecap="round"><path d="M601.9,460.4A4.5,4.5 0 1 1 608.6,459.9"/><path d="M597.4,463.4A4.5,4.5 0 1 0 602.6,470.6"/><path d="M608.3,471.3A4.5,4.5 0 1 0 611.5,463.1"/><path d="M605,457.2L599.1,467.6H610.7"/></g><g fill="#f2f2f4"><circle cx="605" cy="457.2" r="1.9"/><circle cx="599.1" cy="467.6" r="1.9"/><circle cx="610.7" cy="467.6" r="1.9"/></g>
<g transform="translate(730.5,463.6) rotate(-42)" fill="#8b80f8"><path d="M-12.8,0L-9.2,-3.6H5.4V3.6H-9.2Z"/><rect x="6.9" y="-3.6" width="6" height="7.2" rx="1.6"/></g>
<g fill="#f2f2f4"><rect x="845" y="454" width="7" height="7" rx="1"/><rect x="861" y="454" width="7" height="7" rx="1"/><rect x="853" y="465" width="7" height="7" rx="1"/><path d="M851 457.5h10" stroke="#f2f2f4" stroke-width="2"/><path d="M849.5 459.5l5 6" stroke="#f2f2f4" stroke-width="2"/></g>
<g fill="#f4f4f6"><rect x="1178.4" y="457.2" width="16.8" height="14.7" rx="2.2"/><rect x="1174.9" y="461.8" width="2.5" height="7.1" rx=".8"/><rect x="1196.1" y="461.8" width="2.5" height="7.1" rx=".8"/><rect x="1185.7" y="454" width="1.8" height="3.6"/></g><g fill="#404143"><circle cx="1183" cy="462.6" r="1.3"/><circle cx="1190.2" cy="462.6" r="1.3"/><rect x="1181.6" y="467.3" width="2.6" height="1.5"/><rect x="1185.3" y="467.3" width="2.6" height="1.5"/><rect x="1189" y="467.3" width="2.6" height="1.5"/></g>
<g transform="translate(1516,451.2) scale(0.17)"><path d="M27.2 80a13.6 13.6 0 0 1-13.6 13.6A13.6 13.6 0 0 1 0 80a13.6 13.6 0 0 1 13.6-13.6h13.6zm6.8 0a13.6 13.6 0 0 1 13.6-13.6 13.6 13.6 0 0 1 13.6 13.6v34a13.6 13.6 0 0 1-13.6 13.6A13.6 13.6 0 0 1 34 114z" fill="#e01e5a"/><path d="M47.6 27.2A13.6 13.6 0 0 1 34 13.6 13.6 13.6 0 0 1 47.6 0a13.6 13.6 0 0 1 13.6 13.6v13.6zm0 6.9a13.6 13.6 0 0 1 13.6 13.6 13.6 13.6 0 0 1-13.6 13.6H13.6A13.6 13.6 0 0 1 0 47.7a13.6 13.6 0 0 1 13.6-13.6z" fill="#36c5f0"/><path d="M100.8 47.7a13.6 13.6 0 0 1 13.6-13.6 13.6 13.6 0 0 1 13.6 13.6 13.6 13.6 0 0 1-13.6 13.6h-13.6zm-6.8 0a13.6 13.6 0 0 1-13.6 13.6 13.6 13.6 0 0 1-13.6-13.6V13.6A13.6 13.6 0 0 1 80.4 0 13.6 13.6 0 0 1 94 13.6z" fill="#2eb67d"/><path d="M80.4 100.8A13.6 13.6 0 0 1 94 114.4 13.6 13.6 0 0 1 80.4 128a13.6 13.6 0 0 1-13.6-13.6v-13.6zm0-6.8a13.6 13.6 0 0 1-13.6-13.6 13.6 13.6 0 0 1 13.6-13.6h34a13.6 13.6 0 0 1 13.6 13.6A13.6 13.6 0 0 1 114.4 94z" fill="#ecb22e"/></g>
<g transform="translate(886.4,573.4) scale(0.75)"><path fill="#d8d8da" d="M22.28 9.82a5.98 5.98 0 0 0-.52-4.91 6.05 6.05 0 0 0-6.51-2.9A6.07 6.07 0 0 0 4.98 4.18a5.98 5.98 0 0 0-4 2.9 6.05 6.05 0 0 0 .74 7.1 5.98 5.98 0 0 0 .51 4.91 6.05 6.05 0 0 0 6.52 2.9A5.98 5.98 0 0 0 13.26 24a6.06 6.06 0 0 0 5.77-4.21 5.99 5.99 0 0 0 4-2.9 6.06 6.06 0 0 0-.75-7.07zm-9.02 12.61a4.48 4.48 0 0 1-2.88-1.04l.14-.08 4.78-2.76a.8.8 0 0 0 .39-.68v-6.74l2.02 1.17a.07.07 0 0 1 .04.05v5.58a4.5 4.5 0 0 1-4.49 4.5zm-9.66-4.13a4.47 4.47 0 0 1-.53-3.01l.14.08 4.78 2.76a.77.77 0 0 0 .78 0l5.84-3.37v2.33a.08.08 0 0 1-.03.06L9.74 19.95a4.5 4.5 0 0 1-6.14-1.65zM2.34 7.9a4.49 4.49 0 0 1 2.37-1.97V11.6a.77.77 0 0 0 .39.68l5.81 3.35-2.02 1.17a.08.08 0 0 1-.07 0l-4.83-2.79A4.5 4.5 0 0 1 2.34 7.87zm16.6 3.86L13.1 8.36 15.12 7.2a.08.08 0 0 1 .07 0l4.83 2.79a4.49 4.49 0 0 1-.68 8.1v-5.68a.79.79 0 0 0-.4-.67zm2.01-3.02l-.14-.09-4.77-2.78a.78.78 0 0 0-.79 0L9.41 9.23V6.9a.07.07 0 0 1 .03-.06l4.83-2.79a4.5 4.5 0 0 1 6.68 4.66zM8.31 12.86l-2.02-1.16a.08.08 0 0 1-.04-.06V6.07a4.5 4.5 0 0 1 7.38-3.45l-.14.08L8.7 5.46a.8.8 0 0 0-.39.68zm1.1-2.37l2.6-1.5 2.6 1.5v3l-2.6 1.5-2.6-1.5z"/></g>
<g transform="translate(1057,573.4) scale(0.75)"><path fill="#d8d8da" d="M22.28 9.82a5.98 5.98 0 0 0-.52-4.91 6.05 6.05 0 0 0-6.51-2.9A6.07 6.07 0 0 0 4.98 4.18a5.98 5.98 0 0 0-4 2.9 6.05 6.05 0 0 0 .74 7.1 5.98 5.98 0 0 0 .51 4.91 6.05 6.05 0 0 0 6.52 2.9A5.98 5.98 0 0 0 13.26 24a6.06 6.06 0 0 0 5.77-4.21 5.99 5.99 0 0 0 4-2.9 6.06 6.06 0 0 0-.75-7.07zm-9.02 12.61a4.48 4.48 0 0 1-2.88-1.04l.14-.08 4.78-2.76a.8.8 0 0 0 .39-.68v-6.74l2.02 1.17a.07.07 0 0 1 .04.05v5.58a4.5 4.5 0 0 1-4.49 4.5zm-9.66-4.13a4.47 4.47 0 0 1-.53-3.01l.14.08 4.78 2.76a.77.77 0 0 0 .78 0l5.84-3.37v2.33a.08.08 0 0 1-.03.06L9.74 19.95a4.5 4.5 0 0 1-6.14-1.65zM2.34 7.9a4.49 4.49 0 0 1 2.37-1.97V11.6a.77.77 0 0 0 .39.68l5.81 3.35-2.02 1.17a.08.08 0 0 1-.07 0l-4.83-2.79A4.5 4.5 0 0 1 2.34 7.87zm16.6 3.86L13.1 8.36 15.12 7.2a.08.08 0 0 1 .07 0l4.83 2.79a4.49 4.49 0 0 1-.68 8.1v-5.68a.79.79 0 0 0-.4-.67zm2.01-3.02l-.14-.09-4.77-2.78a.78.78 0 0 0-.79 0L9.41 9.23V6.9a.07.07 0 0 1 .03-.06l4.83-2.79a4.5 4.5 0 0 1 6.68 4.66zM8.31 12.86l-2.02-1.16a.08.08 0 0 1-.04-.06V6.07a4.5 4.5 0 0 1 7.38-3.45l-.14.08L8.7 5.46a.8.8 0 0 0-.39.68zm1.1-2.37l2.6-1.5 2.6 1.5v3l-2.6 1.5-2.6-1.5z"/></g>
<g fill="#f2f2f4"><ellipse cx="1134.4" cy="576.2" rx="7.8" ry="2.8"/><path d="M1126.6 578.6c1 1.6 4 2.4 7.8 2.4s6.8-.8 7.8-2.4v3.3c-1 1.6-4 2.4-7.8 2.4s-6.8-.8-7.8-2.4z"/><path d="M1126.6 584.8c1 1.6 4 2.4 7.8 2.4s6.8-.8 7.8-2.4v3.3c-1 1.6-4 2.4-7.8 2.4s-6.8-.8-7.8-2.4z"/></g>
<g fill="none" stroke="#7e6ff2" stroke-width="1.6"><circle cx="1202.5" cy="582.4" r="8.4"/><ellipse cx="1202.5" cy="582.4" rx="3.7800000000000002" ry="8.4"/><path d="M1194.1,582.4H1210.9M1195.36,578.62H1209.64M1195.36,586.18H1209.64"/></g>
<g fill="none" stroke="#7e6ff2" stroke-width="1.6"><circle cx="1270.5" cy="582.4" r="8.4"/><ellipse cx="1270.5" cy="582.4" rx="3.7800000000000002" ry="8.4"/><path d="M1262.1,582.4H1278.9M1263.36,578.62H1277.64M1263.36,586.18H1277.64"/></g>
<g fill="none" stroke="#7e6ff2" stroke-width="1.6"><circle cx="1338.5" cy="582.4" r="8.4"/><ellipse cx="1338.5" cy="582.4" rx="3.7800000000000002" ry="8.4"/><path d="M1330.1,582.4H1346.9M1331.36,578.62H1345.64M1331.36,586.18H1345.64"/></g>
<g fill="none" stroke="#7e6ff2" stroke-width="1.6"><circle cx="1407" cy="582.4" r="8.4"/><ellipse cx="1407" cy="582.4" rx="3.7800000000000002" ry="8.4"/><path d="M1398.6,582.4H1415.4M1399.86,578.62H1414.14M1399.86,586.18H1414.14"/></g>
</svg>
</div></div>
<div class="a" style="left:1000.4px;top:99px;width:131.4px;height:30px;background:#4b4c4f;border-radius:5px"></div>
<div class="a" style="left:1004px;top:103px;width:48.8px;height:21.8px;background:#2b2c2e;border-radius:4px"></div>
<span class="t" style="left:1014px;top:105.8px;font-size:11px;color:#f0f0f2">Editor</span>
<span class="t" style="left:1063.6px;top:105.8px;font-size:11px;color:#c6c6c8">Executions</span>
<div class="a" style="left:1603.2px;top:128px;width:36.6px;height:36.6px;border:1.4px solid #a9a9ab;border-radius:4px;background:#2a2a2c"></div>
<svg class="a" style="left:1615.5px;top:140.3px" width="12" height="12" viewBox="0 0 12 12"><path d="M6 0.5v11M0.5 6h11" stroke="#f0f0f2" stroke-width="2.2"/></svg>
<div class="a" style="left:469.8px;top:492px;width:17px;height:17.4px;border-radius:50%;background:#2b2b2d;border:1.6px solid #48484a"></div>
<svg class="a" style="left:473.5px;top:496px" width="9" height="9" viewBox="0 0 9 9"><path d="M5.8 1.2L2.8 4.5l3 3.3" fill="none" stroke="#b4b4b6" stroke-width="1.9" stroke-linecap="round" stroke-linejoin="round"/></svg>
<div class="a" style="left:492.0px;top:875px;width:37px;height:36px;border:1.4px solid #9c9c9e;border-radius:4px;background:#2a2a2c"></div>
<div class="a" style="left:538.9px;top:875px;width:37px;height:36px;border:1.4px solid #9c9c9e;border-radius:4px;background:#2a2a2c"></div>
<div class="a" style="left:585.8px;top:875px;width:37px;height:36px;border:1.4px solid #9c9c9e;border-radius:4px;background:#2a2a2c"></div>
<div class="a" style="left:632.7px;top:875px;width:37px;height:36px;border:1.4px solid #9c9c9e;border-radius:4px;background:#2a2a2c"></div>
<div class="a" style="left:679.6px;top:875px;width:37px;height:36px;border:1.4px solid #9c9c9e;border-radius:4px;background:#2a2a2c"></div>
<svg class="a" style="left:502.5px;top:885px" width="16" height="16" viewBox="0 0 16 16"><path d="M2.5 6V2.5H6M10 2.5h3.5V6M13.5 10v3.5H10M6 13.5H2.5V10" fill="none" stroke="#ececee" stroke-width="1.8"/></svg>
<svg class="a" style="left:549.4px;top:885px" width="16" height="16" viewBox="0 0 16 16"><circle cx="6.8" cy="6.8" r="4.8" fill="none" stroke="#ececee" stroke-width="1.7"/><path d="M10.3 10.3l3.7 3.7" stroke="#ececee" stroke-width="2.2"/><path d="M6.8 4.5v4.6M4.5 6.8h4.6" stroke="#ececee" stroke-width="1.4"/></svg>
<svg class="a" style="left:596.3px;top:885px" width="16" height="16" viewBox="0 0 16 16"><circle cx="6.8" cy="6.8" r="4.8" fill="none" stroke="#ececee" stroke-width="1.7"/><path d="M10.3 10.3l3.7 3.7" stroke="#ececee" stroke-width="2.2"/><path d="M4.5 6.8h4.6" stroke="#ececee" stroke-width="1.4"/></svg>
<svg class="a" style="left:643.2px;top:885px" width="16" height="16" viewBox="0 0 16 16"><path d="M3.5 8.5A4.8 4.8 0 1 0 5 4.4" fill="none" stroke="#ececee" stroke-width="1.8"/><path d="M2.8 2.2v3.8h3.8" fill="none" stroke="#ececee" stroke-width="1.8"/></svg>
<svg class="a" style="left:690.1px;top:885px" width="16" height="16" viewBox="0 0 16 16"><path d="M4 3.5l5.5 5.5-2.5 4L3 9z" fill="#ececee"/><path d="M9.5 9l3 3" stroke="#ececee" stroke-width="2.2"/><path d="M2.5 2.5L6 6" stroke="#ececee" stroke-width="1.5"/></svg>
<div class="a" style="left:998px;top:874.8px;width:137px;height:36.7px;background:#ea605d;border-radius:4px"></div>
<svg class="a" style="left:1016px;top:885px" width="13" height="15" viewBox="0 0 13 15"><path d="M4.5 1h4M5 1v4.5L1.3 12.5c-.4.9.1 1.7 1.1 1.7h8.2c1 0 1.5-.8 1.1-1.7L8 5.5V1" fill="#fff" stroke="#fff" stroke-width="1.2" stroke-linejoin="round"/></svg>
<span class="t" style="left:1034.8px;top:885.5px;font-size:12.3px;font-weight:bold;color:#fff">Test workflow</span>
<div class="a" style="left:321.4px;top:886px;width:24px;height:25px;border-radius:50%;background:linear-gradient(200deg,#3a7ee0 0%,#4a78d8 45%,#a0609a 70%,#e06878 100%)"></div>
<div class="a" style="left:322.5px;top:887.2px;width:14.5px;height:23px;border-radius:3px;background:#eceef4"></div>
<div class="a" style="left:325.5px;top:891.0px;width:3px;height:3px;border-radius:1px;background:#b4b8c8"></div>
<div class="a" style="left:330.7px;top:891.0px;width:3px;height:3px;border-radius:1px;background:#b4b8c8"></div>
<div class="a" style="left:325.5px;top:896.6px;width:3px;height:3px;border-radius:1px;background:#b4b8c8"></div>
<div class="a" style="left:330.7px;top:896.6px;width:3px;height:3px;border-radius:1px;background:#b4b8c8"></div>
<div class="a" style="left:325.5px;top:902.2px;width:3px;height:3px;border-radius:1px;background:#b4b8c8"></div>
<div class="a" style="left:330.7px;top:902.2px;width:3px;height:3px;border-radius:1px;background:#b4b8c8"></div>
<div class="a" style="left:350.7px;top:877px;width:41px;height:41px;border-radius:50%;background:#ffffff"></div>
<svg class="a" style="left:362px;top:890.5px" width="20" height="14" viewBox="0 0 20 14"><rect x="0.9" y="1.2" width="11.6" height="11.2" rx="2.6" fill="none" stroke="#111" stroke-width="1.6"/><path d="M13 5.3l5.6-3.2v9.6L13 8.5z" fill="none" stroke="#111" stroke-width="1.6" stroke-linejoin="round"/></svg>
<div class="a" style="left:392px;top:896px;width:4px;height:3px;background:#cfcfcf;border-radius:1px"></div>
<div class="a" style="left:397.8px;top:877px;width:83.6px;height:41px;border-radius:20.5px;background:#ffffff"></div>
<svg class="a" style="left:410.5px;top:887.5px" width="15" height="20" viewBox="0 0 15 20"><rect x="4.5" y="0.8" width="6" height="10.4" rx="3" fill="#5aa6d6" stroke="#1a1a1a" stroke-width="1"/><path d="M1.6 7.5a5.9 5.9 0 0 0 11.8 0M7.5 13.4v4.6M4.5 18.3h6" fill="none" stroke="#111" stroke-width="1.5"/></svg>
<svg class="a" style="left:398px;top:877px" width="44" height="41" viewBox="0 0 44 41"><path d="M21 1.5A19 19 0 0 1 21 39.5" fill="none" stroke="#9c9c9c" stroke-width="1.5" stroke-dasharray="0.1 3.6" stroke-linecap="round"/></svg>
<div class="a" style="left:444px;top:880.2px;width:34px;height:34px;border-radius:50%;background:#dc1a22"></div>
<div class="a" style="left:452.2px;top:889.2px;width:16.4px;height:16.6px;border-radius:3.5px;border:1.8px solid #fff;background:#dc1a22"></div>
<svg class="a" style="left:410px;top:179px" width="13" height="18" viewBox="0 0 13 18"><path d="M1.8,1.3V13.6L4.7,10.9L6.7,15.7L8.7,14.9L6.7,10.2H10.7Z" fill="#050505" stroke="#d8d8d8" stroke-width="1.3" stroke-linejoin="round"/></svg>
</body></html>
